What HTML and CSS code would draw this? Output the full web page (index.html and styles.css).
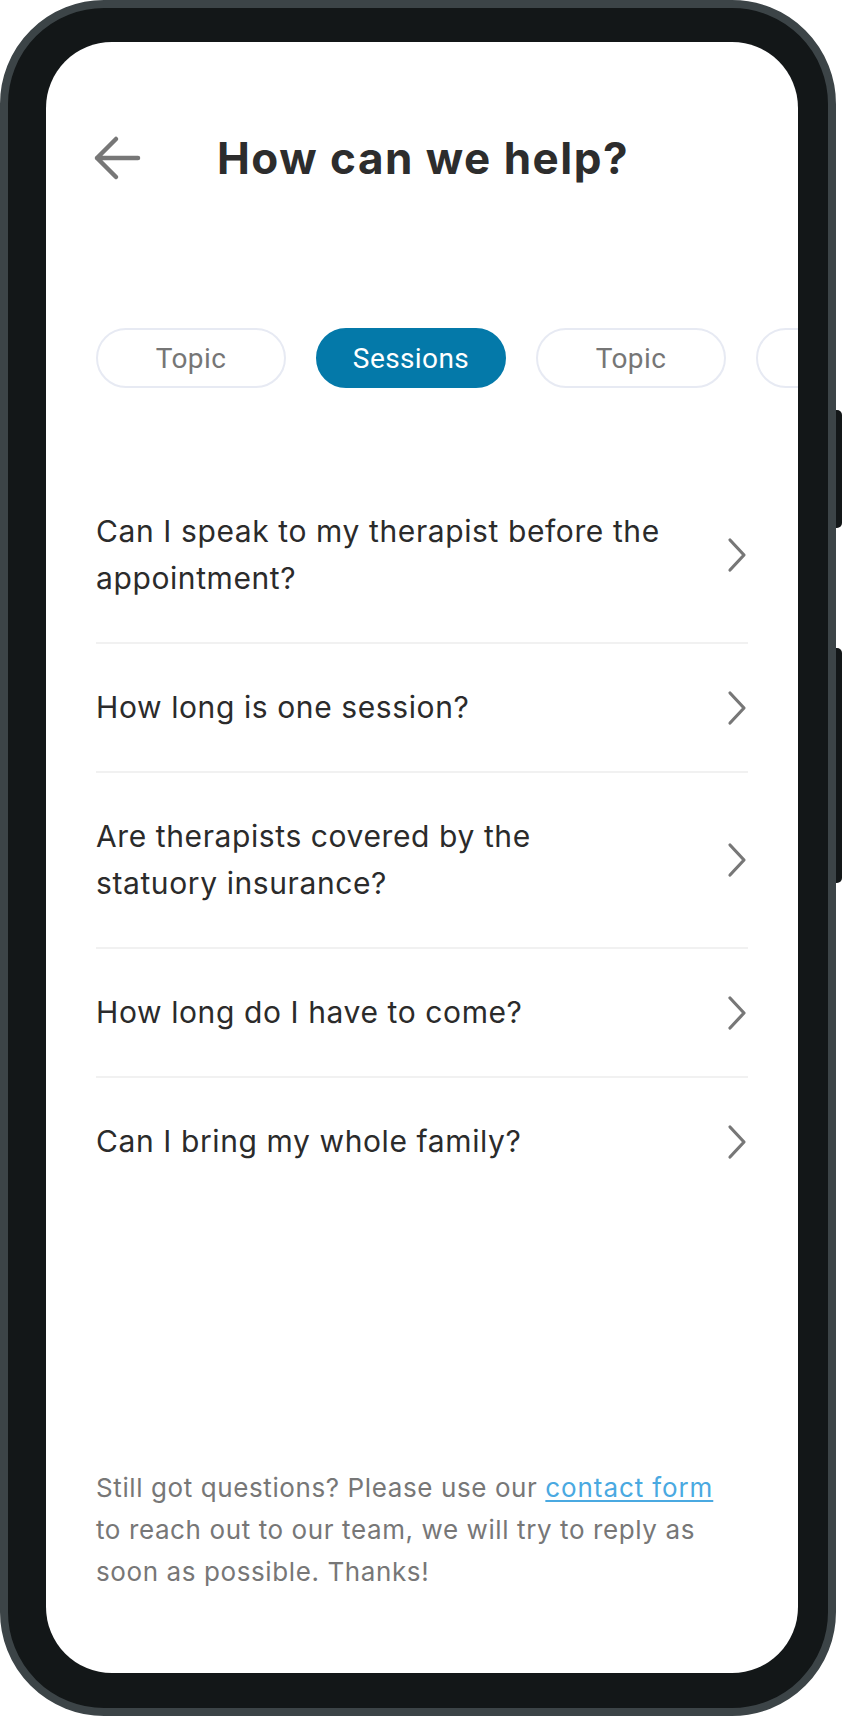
FILE: index.html
```html
<!DOCTYPE html>
<html lang="en">
<head>
<meta charset="utf-8">
<title>How can we help?</title>
<link rel="stylesheet" href="styles.css">
</head>
<body>
<div class="phone">
  <span class="side-btn side-btn-top"></span>
  <span class="side-btn side-btn-bottom"></span>
  <div class="screen">
    <header class="header">
      <svg class="back" width="48" height="46" viewBox="0 0 48 46" aria-label="Back">
        <path d="M45 23 H4 M23 4 L4 23 L23 42" fill="none" stroke="#777777" stroke-width="4.5" stroke-linecap="round" stroke-linejoin="round"/>
      </svg>
      <h1 class="title">How can we help?</h1>
    </header>

    <nav class="chips">
      <span class="chip">Topic</span>
      <span class="chip chip-active">Sessions</span>
      <span class="chip">Topic</span>
      <span class="chip" aria-hidden="true"></span>
    </nav>

    <ul class="faq">
      <li class="faq-item">
        <span class="faq-q">Can I speak to my therapist before the<br>appointment?</span>
        <svg class="chev" width="20" height="36" viewBox="0 0 20 36"><path d="M3 3 L17 18 L3 33" fill="none" stroke="#777777" stroke-width="3.2" stroke-linecap="round" stroke-linejoin="round"/></svg>
      </li>
      <li class="faq-item">
        <span class="faq-q">How long is one session?</span>
        <svg class="chev" width="20" height="36" viewBox="0 0 20 36"><path d="M3 3 L17 18 L3 33" fill="none" stroke="#777777" stroke-width="3.2" stroke-linecap="round" stroke-linejoin="round"/></svg>
      </li>
      <li class="faq-item">
        <span class="faq-q">Are therapists covered by the<br>statuory insurance?</span>
        <svg class="chev" width="20" height="36" viewBox="0 0 20 36"><path d="M3 3 L17 18 L3 33" fill="none" stroke="#777777" stroke-width="3.2" stroke-linecap="round" stroke-linejoin="round"/></svg>
      </li>
      <li class="faq-item">
        <span class="faq-q">How long do I have to come?</span>
        <svg class="chev" width="20" height="36" viewBox="0 0 20 36"><path d="M3 3 L17 18 L3 33" fill="none" stroke="#777777" stroke-width="3.2" stroke-linecap="round" stroke-linejoin="round"/></svg>
      </li>
      <li class="faq-item">
        <span class="faq-q">Can I bring my whole family?</span>
        <svg class="chev" width="20" height="36" viewBox="0 0 20 36"><path d="M3 3 L17 18 L3 33" fill="none" stroke="#777777" stroke-width="3.2" stroke-linecap="round" stroke-linejoin="round"/></svg>
      </li>
    </ul>

    <p class="footer">Still got questions? Please use our <a class="link" href="#">contact form</a><br>to reach out to our team, we will try to reply as<br>soon as possible. Thanks!</p>
  </div>
</div>
</body>
</html>
```

FILE: styles.css
```css
* { box-sizing: border-box; }

html, body {
  margin: 0;
  padding: 0;
  background: #ffffff;
}

body {
  width: 842px;
  height: 1716px;
  font-family: "Inter", "Roboto", "Liberation Sans", sans-serif;
}

.phone {
  position: relative;
  width: 836px;
  height: 1716px;
  border: 8px solid #3c4447;
  border-radius: 104px;
  background: #131718;
  padding: 34px 30px 35px 38px;
}

.side-btn {
  position: absolute;
  right: -14px;
  width: 6px;
  background: #131718;
  border-radius: 0 5px 5px 0;
}
.side-btn-top { top: 402px; height: 118px; }
.side-btn-bottom { top: 640px; height: 235px; }

.screen {
  width: 752px;
  height: 100%;
  background: #ffffff;
  border-radius: 66px;
  overflow: hidden;
  display: flex;
  flex-direction: column;
  padding: 0 50px;
}

.header {
  margin-top: 86px;
  height: 60px;
  display: flex;
  align-items: center;
  gap: 76px;
}

.back {
  flex: none;
  margin-left: -3px;
}

.title {
  margin: 0;
  font-family: "Inter", "Roboto", sans-serif;
  font-weight: 700;
  font-size: 44px;
  color: #2d2d2d;
  letter-spacing: 1.5px;
}

.chips {
  margin-top: 140px;
  display: flex;
  gap: 30px;
}

.chip {
  flex: none;
  width: 190px;
  height: 60px;
  border: 2px solid #e7eaf3;
  border-radius: 30px;
  display: flex;
  align-items: center;
  justify-content: center;
  font-family: "Roboto", "Liberation Sans", sans-serif;
  font-size: 28px;
  letter-spacing: 0.4px;
  color: #767676;
}

.chip-active {
  background: #0479a9;
  border-color: #0479a9;
  color: #ffffff;
}

.faq {
  list-style: none;
  margin: 80px 0 0;
  padding: 0;
}

.faq-item {
  display: flex;
  align-items: center;
  justify-content: space-between;
  padding: 40px 0;
  border-bottom: 2px solid #f1f1f1;
}

.faq-item:last-child {
  border-bottom: none;
}

.faq-q {
  font-size: 30px;
  line-height: 47px;
  letter-spacing: 0.6px;
  color: #2b2b2b;
}

.chev {
  flex: none;
  margin-right: 1px;
}

.footer {
  margin: auto 0 0;
  padding-bottom: 80px;
  font-size: 26px;
  line-height: 42px;
  letter-spacing: 0.6px;
  color: #777777;
}

.link {
  color: #4aa9e1;
  letter-spacing: 0.9px;
  text-decoration: underline;
  text-underline-offset: 3px;
}
```
